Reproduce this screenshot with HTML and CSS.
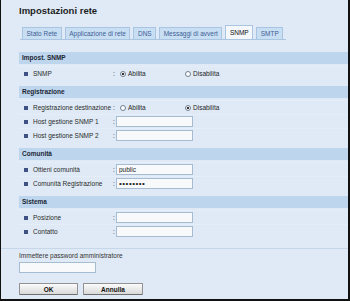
FILE: index.html
```html
<!DOCTYPE html>
<html lang="it">
<head>
    <meta charset="UTF-8">
    <meta name="viewport" content="width=device-width, initial-scale=1.0">
    <title>Impostazioni rete</title>
    <link rel="stylesheet" href="styles.css">
</head>
<body>
    <div class="frame">
        <h1>Impostazioni rete</h1>

        <div class="tabs">
            <span class="tab">Stato Rete</span>
            <span class="tab">Applicazione di rete</span>
            <span class="tab">DNS</span>
            <span class="tab">Messaggi di avvert</span>
            <span class="tab active">SNMP</span>
            <span class="tab">SMTP</span>
        </div>

        <div class="section">
            <div class="section-head">Impost. SNMP</div>
            <div class="row">
                <span class="label">SNMP</span>
                <span class="colon">:</span>
                <div class="value">
                    <label class="opt"><input type="radio" name="snmp" checked>Abilita</label>
                    <label class="opt"><input type="radio" name="snmp">Disabilita</label>
                </div>
            </div>
        </div>

        <div class="section">
            <div class="section-head">Registrazione</div>
            <div class="row">
                <span class="label">Registrazione destinazione</span>
                <span class="colon">:</span>
                <div class="value">
                    <label class="opt"><input type="radio" name="trap">Abilita</label>
                    <label class="opt"><input type="radio" name="trap" checked>Disabilita</label>
                </div>
            </div>
            <div class="row">
                <span class="label">Host gestione SNMP 1</span>
                <span class="colon">:</span>
                <div class="value"><input type="text" class="field"></div>
            </div>
            <div class="row">
                <span class="label">Host gestione SNMP 2</span>
                <span class="colon">:</span>
                <div class="value"><input type="text" class="field"></div>
            </div>
        </div>

        <div class="section">
            <div class="section-head">Comunità</div>
            <div class="row">
                <span class="label">Ottieni comunità</span>
                <span class="colon">:</span>
                <div class="value"><input type="text" class="field" value="public"></div>
            </div>
            <div class="row">
                <span class="label">Comunità Registrazione</span>
                <span class="colon">:</span>
                <div class="value"><input type="password" class="field secret" value="abcdefgh"></div>
            </div>
        </div>

        <div class="section">
            <div class="section-head">Sistema</div>
            <div class="row">
                <span class="label">Posizione</span>
                <span class="colon">:</span>
                <div class="value"><input type="text" class="field"></div>
            </div>
            <div class="row">
                <span class="label">Contatto</span>
                <span class="colon">:</span>
                <div class="value"><input type="text" class="field"></div>
            </div>
        </div>

        <div class="admin">
            <div class="admin-label">Immettere password amministratore</div>
            <input type="password" class="field">
        </div>

        <div class="buttons">
            <button class="btn">OK</button>
            <button class="btn wide">Annulla</button>
        </div>
    </div>
</body>
</html>
```

FILE: styles.css
```css
* {
    box-sizing: border-box;
}
html, body {
    margin: 0;
}
body {
    font-family: "Liberation Sans", Arial, sans-serif;
    font-size: 6.5px;
    color: #262626;
    background-color: #111111;
}
.frame {
    width: 350px;
    height: 301px;
    padding: 5px 0 0 18px;
    background-color: #dfeaf6;
    border-left: 1px solid #111111;
    border-right: 2px solid #111111;
    border-bottom: 2px solid #111111;
    overflow: hidden;
}
h1 {
    margin: 0;
    font-size: 9.5px;
    line-height: 12px;
    font-weight: bold;
    color: #1e1e1e;
}

/* tabs */
.tabs {
    display: flex;
    align-items: flex-end;
    gap: 3px;
    width: fit-content;
    margin: 8px 0 0 1px;
    padding: 0 3px 0 2px;
    border-bottom: 1px solid #a9c5e1;
}
.tab {
    height: 12px;
    padding: 0 3.5px;
    line-height: 11px;
    background-color: #c8def3;
    border: 1px solid #a9c5e1;
    border-bottom: none;
    color: #3f5f96;
}
.tab.active {
    height: 14px;
    line-height: 13px;
    background-color: #f4f7fb;
    color: #111111;
}

/* sections */
.section {
    margin-top: 6px;
}
.tabs + .section {
    margin-top: 12px;
}
.section-head {
    height: 12px;
    line-height: 12px;
    padding-left: 3px;
    background-color: #bdd6ee;
    font-weight: bold;
    color: #1c2634;
}
.row {
    display: flex;
    align-items: center;
    height: 14px;
    padding-left: 5px;
    border-top: 1px dotted #e9f1fa;
}
.section-head + .row {
    margin-top: 2px;
}
.label {
    display: flex;
    align-items: center;
    width: 88px;
    color: #2b2b2b;
}
.label:before {
    content: "";
    width: 4px;
    height: 4px;
    margin-right: 5px;
    background-color: #3d5283;
}
.colon {
    width: 4px;
    line-height: 10px;
    padding-left: 1px;
}
.value {
    display: flex;
    align-items: center;
}
.opt {
    display: flex;
    align-items: center;
    width: 65px;
    padding-left: 4px;
}
.opt input {
    appearance: none;
    width: 6px;
    height: 6px;
    margin: 0 2px 0 0;
    border: 1px solid #6f7f90;
    border-radius: 50%;
    background-color: #ffffff;
}
.opt input:checked {
    background: radial-gradient(circle, #333333 0 1.2px, #ffffff 1.6px);
}
.field {
    width: 77px;
    height: 11px;
    margin: 0;
    padding: 0 2px;
    border: 1px solid #a6bcd3;
    background-color: #f8f9fa;
    font-family: inherit;
    font-size: 6.5px;
    color: #222222;
}
.secret {
    font-size: 8px;
    letter-spacing: 0.5px;
}

/* footer */
.admin {
    margin-top: 10px;
    padding-top: 2px;
    border-top: 1px solid #c6d7ea;
    margin-left: -18px;
    padding-left: 18px;
}
.admin-label {
    line-height: 10px;
    color: #333333;
}
.admin .field {
    display: block;
    margin-top: 1px;
}
.buttons {
    display: flex;
    gap: 5px;
    margin-top: 10px;
}
.btn {
    width: 59px;
    height: 12px;
    padding: 0;
    border: 1px solid #929292;
    border-bottom-color: #6f6f6f;
    border-radius: 1px;
    background: linear-gradient(#fbfbfb, #d9d9d9);
    font-family: inherit;
    font-size: 6.5px;
    font-weight: bold;
    color: #111111;
}
.btn.wide {
    width: 60px;
}
```
